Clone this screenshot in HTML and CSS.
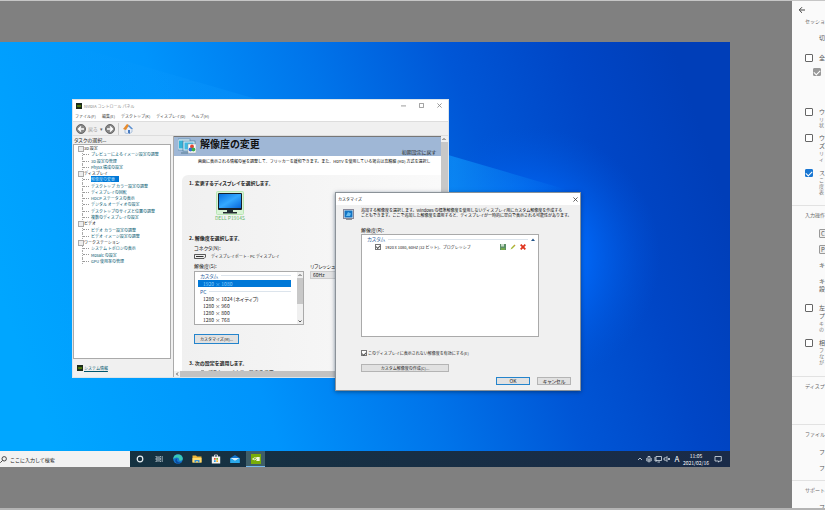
FILE: index.html
```
<!DOCTYPE html>
<html lang="ja">
<head>
<meta charset="utf-8">
<title>リモート デスクトップ</title>
<link rel="stylesheet" href="styles.css">
</head>
<body>
<main class="stage">
  <section class="desktop">
    <svg class="wallpaper" viewBox="0 0 730 425" preserveAspectRatio="none" aria-hidden="true">
      <defs>
        <linearGradient id="sky" x1="0" y1="0.6" x2="1" y2="0.4">
          <stop offset="0" stop-color="#00a6ff"/>
          <stop offset="0.3" stop-color="#0094fc"/>
          <stop offset="0.52" stop-color="#0074ea"/>
          <stop offset="0.7" stop-color="#0056d6"/>
          <stop offset="0.86" stop-color="#0046c6"/>
          <stop offset="1" stop-color="#003eb8"/>
        </linearGradient>
        <radialGradient id="glow" gradientUnits="userSpaceOnUse" cx="530" cy="215" r="130">
          <stop offset="0" stop-color="#0080ff"/>
          <stop offset="0.4" stop-color="#006cff" stop-opacity="0.8"/>
          <stop offset="1" stop-color="#0058e0" stop-opacity="0"/>
        </radialGradient>
        <linearGradient id="beam" x1="0" y1="0" x2="1" y2="0">
          <stop offset="0.1" stop-color="#109cff" stop-opacity="0"/>
          <stop offset="0.8" stop-color="#109cff" stop-opacity="0.6"/>
          <stop offset="1" stop-color="#109cff" stop-opacity="0"/>
        </linearGradient>
      </defs>
      <rect width="730" height="425" fill="url(#sky)"/>
      <rect width="730" height="425" fill="url(#glow)"/>
      <path d="M0 0H60L568 148L500 330H0Z" fill="url(#beam)"/>
    </svg>

    <section class="window control-panel">
      <header class="titlebar">
        <svg class="nv" viewBox="0 0 8 8"><rect width="8" height="8" fill="#1c2b1a"/><path d="M1 4Q4 1 7 4Q4 7 1 4Z" fill="#76b900"/><circle cx="4" cy="4" r="1" fill="#1c2b1a"/></svg>
        <span class="title">NVIDIA コントロール パネル</span>
        <button class="caption" aria-label="最小化"><svg viewBox="0 0 6 6"><path d="M0 3.500H6"/></svg></button>
        <button class="caption" aria-label="最大化"><svg viewBox="0 0 6 6"><path d="M.5 .5H5.500V5.500H.5Z"/></svg></button>
        <button class="caption" aria-label="閉じる"><svg viewBox="0 0 6 6"><path d="M.5 .5L5.500 5.500M5.500 .5L.5 5.500"/></svg></button>
      </header>
      <nav class="menubar"><a href="#">ファイル(F)</a><a href="#">編集(E)</a><a href="#">デスクトップ(K)</a><a href="#">ディスプレイ(D)</a><a href="#">ヘルプ(H)</a></nav>
      <div class="toolbar">
        <button class="tool"><svg class="round" viewBox="0 0 10 10"><circle cx="5" cy="5" r="4.500" fill="#888" stroke="#666"/><path d="M8 5H2.500M5 2.500L2.500 5L5 7.500" stroke="#fff" stroke-width="1.400" fill="none"/></svg><span>戻る</span></button>
        <span class="drop">▾</span>
        <button class="tool" aria-label="進む"><svg class="round" viewBox="0 0 10 10"><circle cx="5" cy="5" r="4.500" fill="#888" stroke="#666"/><path d="M2 5H7.500M5 2.500L7.500 5L5 7.500" stroke="#fff" stroke-width="1.400" fill="none"/></svg></button>
        <span class="separator"></span>
        <button class="tool" aria-label="ホーム"><svg class="round" viewBox="0 0 10 10"><path d="M2 4.500V9L6 10L9 8V4L6 2Z" fill="#e8eef8" stroke="#86a8cf" stroke-width=".6"/><path d="M0 5L4 0L6 1L3 6Z" fill="#e88b2c"/><path d="M6 1L10 5L8 5L5 2Z" fill="#5b8fd0"/><path d="M5 6H7V9.700L5 9Z" fill="#4b7cc0"/></svg></button>
      </div>
      <div class="panes">
        <aside class="tasks">
          <h2>タスクの選択...</h2>
          <div class="treebox">
            <ul class="tree">
              <li class="group">3D 設定</li>
              <li><a href="#">プレビューによるイメージ設定の調整</a></li>
              <li><a href="#">3D 設定の管理</a></li>
              <li><a href="#">PhysX 構成の設定</a></li>
              <li class="group">ディスプレイ</li>
              <li><a class="current" href="#">解像度の変更</a></li>
              <li><a href="#">デスクトップ カラー設定の調整</a></li>
              <li><a href="#">ディスプレイの回転</a></li>
              <li><a href="#">HDCP ステータスの表示</a></li>
              <li><a href="#">デジタル オーディオの設定</a></li>
              <li><a href="#">デスクトップのサイズと位置の調整</a></li>
              <li><a href="#">複数のディスプレイの設定</a></li>
              <li class="group">ビデオ</li>
              <li><a href="#">ビデオ カラー設定の調整</a></li>
              <li><a href="#">ビデオ イメージ設定の調整</a></li>
              <li class="group">ワークステーション</li>
              <li><a href="#">システム トポロジの表示</a></li>
              <li><a href="#">Mosaic の設定</a></li>
              <li><a href="#">GPU 使用率の管理</a></li>
            </ul>
          </div>
          <footer class="sysinfo"><svg class="nv" viewBox="0 0 8 8"><rect width="8" height="8" fill="#1c2b1a"/><path d="M1 4Q4 1 7 4Q4 7 1 4Z" fill="#76b900"/><circle cx="4" cy="4" r="1" fill="#1c2b1a"/></svg><a href="#">システム情報</a></footer>
        </aside>
        <section class="content">
          <div class="scrollarea">
            <div class="page">
              <header class="banner">
                <svg viewBox="0 0 18 16"><rect x="0" y="1" width="12" height="11" fill="#e8f4fa" stroke="#5a8fae" stroke-width=".7"/><rect x="1" y="2.500" width="4" height="8" fill="#37b4d8"/><rect x="5" y="3" width="12" height="10" fill="#d8edf7" stroke="#477a98" stroke-width=".7"/><rect x="6.500" y="4.500" width="9" height="7" fill="#42b9e2"/><rect x="10" y="6" width="8" height="9" fill="#fff" stroke="#999" stroke-width=".5"/><circle cx="14" cy="8.500" r="1.900" fill="#e54632"/><circle cx="12.500" cy="11.500" r="1.900" fill="#3667d6"/><circle cx="15.400" cy="11.500" r="1.900" fill="#3cab49"/><path d="M3 15H10" stroke="#547b90"/></svg>
                <h1>解像度の変更</h1>
                <a href="#">初期設定に戻す</a>
              </header>
              <p class="lead">画面に表示される情報の量を調整して、フリッカーを緩和できます。また、HDTV を使用している場合は高精細 (HD) 方式を選択し</p>
              <div class="card">
                <h3>1. 変更するディスプレイを選択します。</h3>
                <figure class="display">
                  <svg viewBox="0 0 28 24"><defs><linearGradient id="scr" x1="0" y1="0" x2="1" y2="1"><stop offset="0" stop-color="#0872e2"/><stop offset=".5" stop-color="#35a9ff"/><stop offset="1" stop-color="#0865d8"/></linearGradient></defs><rect x=".5" y=".5" width="27" height="23" rx="1" fill="#d9f3d6" stroke="#b9e6b4"/><rect x="2" y="2" width="24" height="17" rx="1" fill="#17202a"/><rect x="3" y="3" width="22" height="14" fill="url(#scr)"/><path d="M11 19H17V21H21V22.500H7V21H11Z" fill="#222c30"/></svg>
                  <figcaption>DELL P1914S</figcaption>
                </figure>
                <h3 class="step">2. 解像度を選択します。</h3>
                <div class="fields">
                  <p class="field">コネクタ(N):</p>
                  <p class="port"><svg viewBox="0 0 12 5"><path d="M.5 .5H11.500V3L10 4.500H.5Z" fill="#eee" stroke="#333" stroke-width=".8"/><path d="M2 2.500H9.500" stroke="#333"/></svg>ディスプレイポート - PC ディスプレイ</p>
                  <div class="pair">
                    <div class="resolution">
                      <p class="field">解像度(S):</p>
                      <div class="listbox">
                        <ul role="listbox" aria-label="解像度">
                          <li class="heading">カスタム</li>
                          <li class="chosen" role="option" aria-selected="true">1920 × 1080</li>
                          <li class="heading">PC</li>
                          <li role="option">1280 × 1024 (ネイティブ)</li>
                          <li role="option">1280 × 960</li>
                          <li role="option">1280 × 800</li>
                          <li role="option">1280 × 768</li>
                        </ul>
                        <div class="vbar"><svg viewBox="0 0 6 6"><path d="M1.500 4L3 2.500L4.500 4"/></svg><i></i><svg viewBox="0 0 6 6"><path d="M1.500 2.500L3 4L4.500 2.500"/></svg></div>
                      </div>
                    </div>
                    <div class="refresh"><label class="field" for="rate">リフレッシュ レート(R):</label><select id="rate"><option>60Hz</option></select></div>
                  </div>
                  <button class="btn focus customize">カスタマイズ(M)...</button>
                </div>
                <h3 class="apply">3. 次の設定を適用します。</h3>
                <label class="radio"><input type="radio">デスクトップ カラー設定を使用</label>
              </div>
            </div>
            <div class="vbar main"><svg viewBox="0 0 6 6"><path d="M1.500 4L3 2.500L4.500 4"/></svg><i></i></div>
          </div>
          <div class="hbar"><svg viewBox="0 0 6 6"><path d="M4 1.500L2.500 3L4 4.500"/></svg><i></i></div>
        </section>
      </div>
    </section>

    <section class="window dialog" role="dialog" aria-label="カスタマイズ">
      <header class="titlebar"><span class="title">カスタマイズ</span><button class="caption" aria-label="閉じる"><svg viewBox="0 0 6 6"><path d="M.5 .5L5.500 5.500M5.500 .5L.5 5.500"/></svg></button></header>
      <div class="dialog-body">
        <div class="intro">
          <svg viewBox="0 0 11 12"><rect x=".5" y=".5" width="10" height="9" fill="#e2e6e9" stroke="#889"/><rect x="1.500" y="1.500" width="8" height="7" fill="#1274c4"/><path d="M3 7L5 3L8 4.500L7 7Z" fill="#67bdf0"/><path d="M3 11H9V10H3Z" fill="#8b9298"/></svg>
          <p>追加する解像度を選択します。Windows の標準解像度を使用しないディスプレイ用にカスタム解像度を作成する<br>こともできます。ここで追加した解像度を適用すると、ディスプレイが一時的に空白で表示される可能性があります。</p>
        </div>
        <div class="dialog-main">
          <p class="field">解像度(R):</p>
          <div class="custom-list">
            <div class="heading">カスタム<svg viewBox="0 0 4 3"><path d="M0 3L2 .5L4 3Z" fill="#245489"/></svg></div>
            <div class="custom-row">
              <label><input type="checkbox" checked>1920 x 1080, 60Hz (32 ビット)、プログレッシブ</label>
              <button aria-label="保存"><svg viewBox="0 0 6 6"><rect width="6" height="6" fill="#5c8f66"/><rect x="1" width="3" height="2.500" fill="#c8dcc9"/><rect x="1" y="4" width="4" height="2" fill="#77a94c"/></svg></button>
              <button aria-label="編集"><svg viewBox="0 0 6 6"><path d="M.5 5.500L1.500 3.500L4.500 .5L5.500 1.500L2.500 4.500Z" fill="#a4b832"/><path d="M4 1L5 2" stroke="#d88c3a"/></svg></button>
              <button aria-label="削除"><svg viewBox="0 0 6 6"><path d="M.7 .7L5.300 5.300M5.300 .7L.7 5.300" stroke="#e0321c" stroke-width="1.800"/></svg></button>
            </div>
          </div>
          <label class="enable"><input type="checkbox" checked>このディスプレイに表示されない解像度を有効にする(E)</label>
          <button class="btn create">カスタム解像度の作成(C)...</button>
        </div>
        <footer class="actions"><button class="btn focus">OK</button><button class="btn">キャンセル</button></footer>
      </div>
    </section>

    <footer class="taskbar">
      <label class="search"><svg viewBox="0 0 7 7"><circle cx="4.200" cy="2.800" r="2.200"/><path d="M2.600 4.400L.3 6.700"/></svg><input type="text" placeholder="ここに入力して検索" aria-label="検索"></label>
      <nav class="apps">
        <button aria-label="Cortana"><svg viewBox="0 0 10 10"><circle cx="5" cy="5" r="2.800" fill="none" stroke="#e6eef2" stroke-width="1.200"/></svg></button>
        <button aria-label="タスク ビュー"><svg viewBox="0 0 10 10"><path d="M2 2V3H6.500V2M2 8V7H6.500V8M2 4.200H6.500V5.800H2ZM8.200 2V8" fill="none" stroke="#b9c7ce" stroke-width=".8"/></svg></button>
        <button aria-label="Edge"><svg viewBox="0 0 10 10"><circle cx="5" cy="5" r="4.800" fill="#1477cf"/><path d="M.3 4.500A4.800 4.800 0 0 1 9.800 5Q9.500 6.800 7.200 6.700Q5.600 6.500 6.200 5.400Q6 3.500 3.800 3.500Q1.500 3.500 .3 5Z" fill="#3ac9b5"/><path d="M4 4.500Q2.800 6.500 5 8Q7 9 8.800 7.500Q7 10 4.500 9.700Q1.500 8 2.500 5.500Z" fill="#0c4a9c"/></svg></button>
        <button aria-label="エクスプローラー"><svg viewBox="0 0 10 10"><path d="M.5 1.500H4L5 2.500H9.500V8.500H.5Z" fill="#f0b638"/><path d="M.5 4H9.500V8.500H.5Z" fill="#ffdc70"/><path d="M2.500 6H7.500V8.500H6V7.300H4V8.500H2.500Z" fill="#3c92d4"/></svg></button>
        <button aria-label="ストア"><svg viewBox="0 0 10 10"><path d="M3.500 3V1H6.500V3" fill="none" stroke="#eee" stroke-width=".8"/><path d="M.8 2.500H9.200V9.500H.8Z" fill="#f3f3f3"/><path d="M3 4H4.700V5.700H3Z" fill="#e65730"/><path d="M5.300 4H7V5.700H5.300Z" fill="#78b92b"/><path d="M3 6.300H4.700V8H3Z" fill="#269de8"/><path d="M5.300 6.300H7V8H5.300Z" fill="#f2b72a"/></svg></button>
        <button aria-label="メール"><svg viewBox="0 0 10 10"><path d="M.3 4L5 1L9.700 4V9H.3Z" fill="#1174ce"/><path d="M.3 4H9.700L5 7Z" fill="#d4effc"/><path d="M.3 4L5 7L9.700 4V9H.3Z" fill="#2baaec"/></svg></button>
        <button class="active" aria-label="NVIDIA"><svg viewBox="0 0 10 10"><rect width="10" height="10" fill="#79ad08"/><path d="M1.500 5Q4 2.500 6 4.500Q4 7 1.500 5Z" fill="none" stroke="#fff" stroke-width=".8"/><path d="M5 3H8.700V7H5Q7 5 5 3Z" fill="#f0f6df"/></svg></button>
      </nav>
      <div class="tray">
        <svg viewBox="0 0 8 8"><path d="M2 5L4 3L6 5"/></svg>
        <svg viewBox="0 0 8 8"><path d="M3 1.500H5V5H3ZM1.800 3V6H6.200V3M4 6V7.500"/></svg>
        <svg viewBox="0 0 8 8"><path d="M2 1.500H7.500V5.500H2ZM3.500 7H6M1 2V6H3"/></svg>
        <svg viewBox="0 0 8 8"><path d="M1 3H2.500L4 1.500V6.500L2.500 5H1ZM5 3L7 5M7 3L5 5"/></svg>
        <span class="ime">A</span>
        <time datetime="2021-02-16T11:05">11:05<br>2021/02/16</time>
        <svg viewBox="0 0 8 8"><path d="M1 1.500H7.300V6H5.500L4.500 7.200V6H1Z"/></svg>
      </div>
    </footer>
  </section>
</main>

<aside class="session">
  <button class="back" aria-label="戻る"><svg viewBox="0 0 8 8"><path d="M7 4H1.500M4 1.200L1.200 4L4 6.800"/></svg></button>
  <section class="first">
    <h2>セッショ</h2>
    <p class="item switch">切</p>
    <label class="item full"><input type="checkbox">全</label>
    <label class="item nested"><input type="checkbox" checked disabled aria-label="サイズ変更"></label>
    <label class="item sized"><input type="checkbox"><span>ウ<small>リ<br>状</small></span></label>
    <label class="item window-size"><input type="checkbox"><span>ウ<br>ズ<small>リ<br>ィ</small></span></label>
    <label class="item smooth"><input type="checkbox" checked><span>ス<small>こ<br>度<br>表</small></span></label>
  </section>
  <section class="input">
    <h2>入力操作</h2>
    <p class="item"><kbd>C</kbd></p>
    <p class="item"><kbd>P</kbd></p>
    <p class="item">キ</p>
    <p class="item double">キ<br>設</p>
    <label class="item left"><input type="checkbox"><span>左<br>プ<small>キ<br>の</small></span></label>
    <label class="item relative"><input type="checkbox"><span>相<small>フ<br>な<br>が</small></span></label>
  </section>
  <section class="screens"><h2>ディスプ</h2></section>
  <section class="files"><h2>ファイル</h2><p class="item">フ</p><p class="item">フ</p></section>
  <section class="support"><h2>サポート</h2><p class="item">フ</p></section>
</aside>
</body>
</html>
```
FILE: styles.css
```
* { box-sizing: border-box; margin: 0; padding: 0; }
html, body { height: 100%; }
body {
  display: flex;
  overflow: hidden;
  background: #808080;
  border-top: 1px solid #c6c6c6;
  border-bottom: 2px solid #b4b4b4;
  color: #222;
  font: 5px/6px "Noto Sans CJK JP", sans-serif;
  font-feature-settings: "palt";
}
button, input, select { font: inherit; color: inherit; font-feature-settings: inherit; border: 0; background: none; }
ul { list-style: none; }
svg { display: block; flex: none; }
a { color: inherit; text-decoration: none; }
h1, h2, h3 { font: inherit; }

.stage { flex: 1; min-width: 0; display: flex; padding: 41px 62px 41px 0; }
.desktop { position: relative; flex: 1; min-width: 0; display: flex; flex-direction: column; justify-content: flex-end; white-space: nowrap; }
.wallpaper { position: absolute; inset: 0; width: 100%; height: 100%; }

/* Dense interface text, set full-width at the smallest size */
.title, .menubar, .tree, .lead, .intro, .enable, .custom-row, .sysinfo, .create, .customize, .port {
  font-size: 4px;
  font-feature-settings: normal;
}

/* Windows */
.window { position: absolute; display: flex; flex-direction: column; }
.control-panel { left: 72px; top: 57px; width: 377px; height: 279px; background: #f0f0f0; border: 1px solid #dbe4ea; }
.dialog { left: 335px; top: 150px; width: 246px; height: 199px; background: #f0f0f0; border: 1px solid #8b9298; box-shadow: 0 1px 4px #00204088; }
.titlebar { display: flex; align-items: center; height: 11px; background: #fff; padding: 0 3px; color: #888; }
.title { flex: 1; margin-left: 2px; }
.nv { width: 6px; height: 6px; }
.caption { display: flex; justify-content: center; width: 18px; }
.control-panel .caption:last-child { margin-right: -3px; }
.caption svg { width: 5px; height: 5px; fill: none; stroke: #888; stroke-width: 1; }
.menubar { display: flex; align-items: center; gap: 6px; height: 10px; padding-left: 2px; background: #fff; color: #444; }
.toolbar { display: flex; align-items: center; height: 14px; padding-left: 3px; border-top: 1px solid #ddd; }
.tool { display: flex; align-items: center; gap: 2px; color: #999; }
.round { width: 10px; height: 10px; }
.drop { width: 8px; color: #666; text-align: center; }
.separator { width: 1px; height: 12px; margin: 0 4px 0 3px; background: #ccc; }
.panes { flex: 1; min-height: 0; display: flex; border-top: 1px solid #ddd; }

.tasks { flex: 0 0 100px; display: flex; flex-direction: column; }
.tasks h2 { padding-left: 1px; height: 8px; line-height: 8px; }
.treebox { flex: 1; min-height: 0; margin-right: 2px; border: 1px solid #aaa; background: #fff; }
.tree { display: grid; grid-template-rows: repeat(19, 1fr); height: 119px; padding-left: 6px; color: #00566e; }
.tree li { position: relative; display: flex; align-items: center; min-height: 0; margin-left: 2px; padding-left: 8px; border-left: 1px dotted #aaa; }
.tree li::before { content: ""; position: absolute; left: 0; top: 3px; width: 6px; border-top: 1px dotted #999; }
.tree .group { padding-left: 1px; border-color: transparent; color: #111; }
.tree .group::before { left: -5px; top: 1px; width: 4px; height: 4px; border: 1px solid #aaa; background: #eee; }
.tree .current { padding-right: 4px; background: #0078d7; color: #b4e0ff; }
.sysinfo { display: flex; align-items: center; gap: 1px; height: 18px; padding-left: 4px; color: #00566e; }
.sysinfo a { text-decoration: underline; }

.content { flex: 1; min-width: 0; display: flex; flex-direction: column; background: #fff; border-left: 1px solid #aaa; }
.scrollarea { flex: 1; min-height: 0; display: flex; overflow: hidden; }
.page { flex: 1; min-width: 0; overflow: hidden; }
.banner { display: flex; align-items: center; height: 20px; padding: 0 5px 1px 4px; background: #9fb7d6; border-top: 1px solid #777; }
.banner svg { width: 18px; height: 16px; }
.banner h1 { flex: 1; margin-left: 4px; font-size: 10px; line-height: 14px; font-weight: 700; color: #111; align-self: flex-start; }
.banner a { align-self: flex-end; }
.lead { height: 10px; line-height: 10px; padding-left: 24px; color: #000; }
.card { margin: 9px 0 0 8px; padding: 5px 0 0 7px; height: 220px; border-radius: 6px 0 0 0; background: linear-gradient(90deg, #f0f0f0, #fafafa); }
.card h3 { font-weight: 700; }
.display { display: flex; flex-direction: column; align-items: center; width: 28px; margin: 5px 0 14px 27px; color: #64b868; }
.display svg { width: 28px; height: 24px; }
.fields { padding: 4px 0 0 5px; }
.port { display: flex; align-items: center; gap: 5px; margin: 2px 0 4px; }
.port svg { width: 12px; height: 5px; }
.pair { display: flex; gap: 6px; }
.resolution { width: 110px; }
.field { display: block; margin-bottom: 2px; }
.listbox { display: flex; height: 54px; overflow: hidden; border: 1px solid #aaa; background: #fff; }
.listbox ul { flex: 1; min-width: 0; padding: 0 6px 0 3px; }
.listbox li { height: 7px; line-height: 7px; padding-left: 5px; }
.heading { display: flex; align-items: center; gap: 3px; color: #2a5d9c; }
.heading::after { content: ""; flex: 1; border-top: 1px solid #dce4ec; }
.listbox .heading { padding-left: 2px; }
.listbox .chosen { margin: 1px 0; background: #0078d7; color: #8ad0ff; }
.vbar { display: flex; flex-direction: column; width: 6px; background: #f0f0f0; }
.vbar svg, .hbar svg { width: 6px; height: 6px; fill: none; stroke: #555; stroke-width: 1; }
.vbar i { height: 26px; margin-bottom: auto; background: #c8c8c8; }
.vbar.main { width: 7px; }
.vbar.main i { height: 160px; }
.hbar { display: flex; height: 6px; background: #f0f0f0; }
.hbar i { width: 200px; background: #c2c2c2; }
.refresh { flex: 1; min-width: 0; overflow: hidden; }
.refresh select { display: block; width: 60px; height: 8px; padding-left: 2px; appearance: none; border: 1px solid #ccc; background: #e4e4e4; }
.btn { display: flex; align-items: center; justify-content: center; height: 8px; background: #e1e1e1; border: 1px solid #b4b4b4; }
.btn.focus { border-color: #2484cc; }
.customize { width: 45px; height: 10px; margin-top: 9px; }
.card .apply { margin: 16px 0 3px; }
.radio { display: flex; align-items: center; gap: 3px; padding-left: 11px; }
.radio input { width: 5px; height: 5px; appearance: none; border: 1px solid #888; border-radius: 50%; }

/* Dialog */
.dialog .titlebar { height: 12px; padding: 0 2px; color: #222; }
.dialog .titlebar .title { margin-left: 0; }
.dialog .caption { margin-right: -6px; }
.dialog .caption svg { stroke: #444; }
.dialog-body { flex: 1; display: flex; flex-direction: column; padding: 3px 9px 5px 7px; }
.intro { display: flex; gap: 7px; color: #000; }
.intro svg { width: 11px; height: 12px; margin-top: 1px; }
.intro p { line-height: 5px; }
.dialog-main { margin: 6px 0 0 18px; }
.dialog-main .field { margin-bottom: 1px; }
.custom-list { width: 178px; height: 103px; padding: 1px 3px 0 5px; border: 1px solid #aaa; background: #fff; }
.custom-list .heading svg { order: 1; width: 4px; height: 3px; }
.custom-row { display: flex; align-items: center; gap: 4px; margin: 1px 9px 0 8px; height: 7px; }
.custom-row label { flex: 1; display: flex; align-items: center; gap: 4px; }
.custom-row svg { width: 6px; height: 6px; }
input[type="checkbox"] { flex: none; width: 6px; height: 6px; appearance: none; border: 1px solid #777; background: #fff; }
input[type="checkbox"]:checked { display: grid; place-items: center; }
input[type="checkbox"]:checked::after { content: ""; width: 3px; height: 2px; border: solid #555; border-width: 0 0 1px 1px; transform: rotate(-45deg); }
.enable { display: flex; align-items: center; gap: 1px; margin-top: 13px; }
.create { width: 88px; margin-top: 8px; }
.actions { display: flex; justify-content: flex-end; gap: 7px; margin-top: auto; }
.actions .btn { width: 34px; }

/* Taskbar */
.taskbar { position: relative; display: flex; height: 16px; background: linear-gradient(90deg, #13333f, #1a2b48); color: #fff; }
.search { display: flex; align-items: center; gap: 3px; width: 130px; background: #f2f2f2; color: #444; }
.search svg { width: 7px; height: 7px; fill: none; stroke: #444; stroke-width: 1; }
.search input { flex: 1; min-width: 0; height: 10px; font-size: 5px; font-feature-settings: normal; }
.search input::placeholder { color: #222; }
.apps { display: flex; }
.apps button { display: flex; align-items: center; justify-content: center; width: 19px; }
.apps svg { width: 10px; height: 10px; }
.apps .active { margin-left: 2px; background: #3f5e68; border-bottom: 1px solid #76b9ed; }
.tray { display: flex; align-items: center; gap: 1px; margin-left: auto; padding-right: 8px; }
.tray svg { width: 8px; height: 8px; fill: none; stroke: #d9e2ea; stroke-width: .8; }
.ime { width: 10px; font-size: 8px; text-align: center; }
.tray time { width: 26px; line-height: 7px; text-align: center; margin-right: 4px; }

/* Session options */
.session { flex: 0 0 33px; overflow: hidden; white-space: nowrap; background: #fafafa; color: #555; font-size: 6px; line-height: 8px; font-feature-settings: normal; }
.back { display: block; margin: 5px 0 0 6px; }
.back svg { width: 8px; height: 8px; fill: none; stroke: #444; stroke-width: 1; }
.session section { padding: 5px 0 0 13px; border-top: 1px solid #e2e2e2; }
.session .first { padding-top: 3px; border-top: 0; height: 191px; }
.session h2 { height: 8px; font-size: 5px; color: #666; }
.session .item { display: flex; align-items: flex-start; gap: 6px; padding-left: 14px; height: 16px; }
.session label.item { padding-left: 0; }
.session input[type="checkbox"] { width: 8px; height: 8px; border: 1px solid #666; border-radius: 1px; }
.session input[type="checkbox"]:checked { background: #1976d2; border-color: #1976d2; }
.session input[type="checkbox"]:disabled { background: #999; border-color: #999; }
.session input[type="checkbox"]:checked::after { width: 5px; height: 3px; border-color: #fff; }
.session small { display: block; font-size: 5px; line-height: 6px; color: #777; }
.session .switch { margin-top: 9px; height: 20px; }
.session .full { height: 14px; }
.session label.nested { padding-left: 8px; height: 40px; }
.session .sized { height: 26px; }
.session .window-size { height: 35px; }
.session .input { height: 171px; }
.session .input h2 { margin-bottom: 10px; }
.session kbd { font: inherit; border: 1px solid #999; border-radius: 1px; line-height: 7px; padding: 0 1px; background: #eee; }
.session .double { height: 27px; }
.session .left { height: 35px; }
.session .screens { height: 48px; }
.session .files { height: 56px; }
.session .files h2 { margin-bottom: 10px; }
.session .support h2 { margin-bottom: 9px; }
```
